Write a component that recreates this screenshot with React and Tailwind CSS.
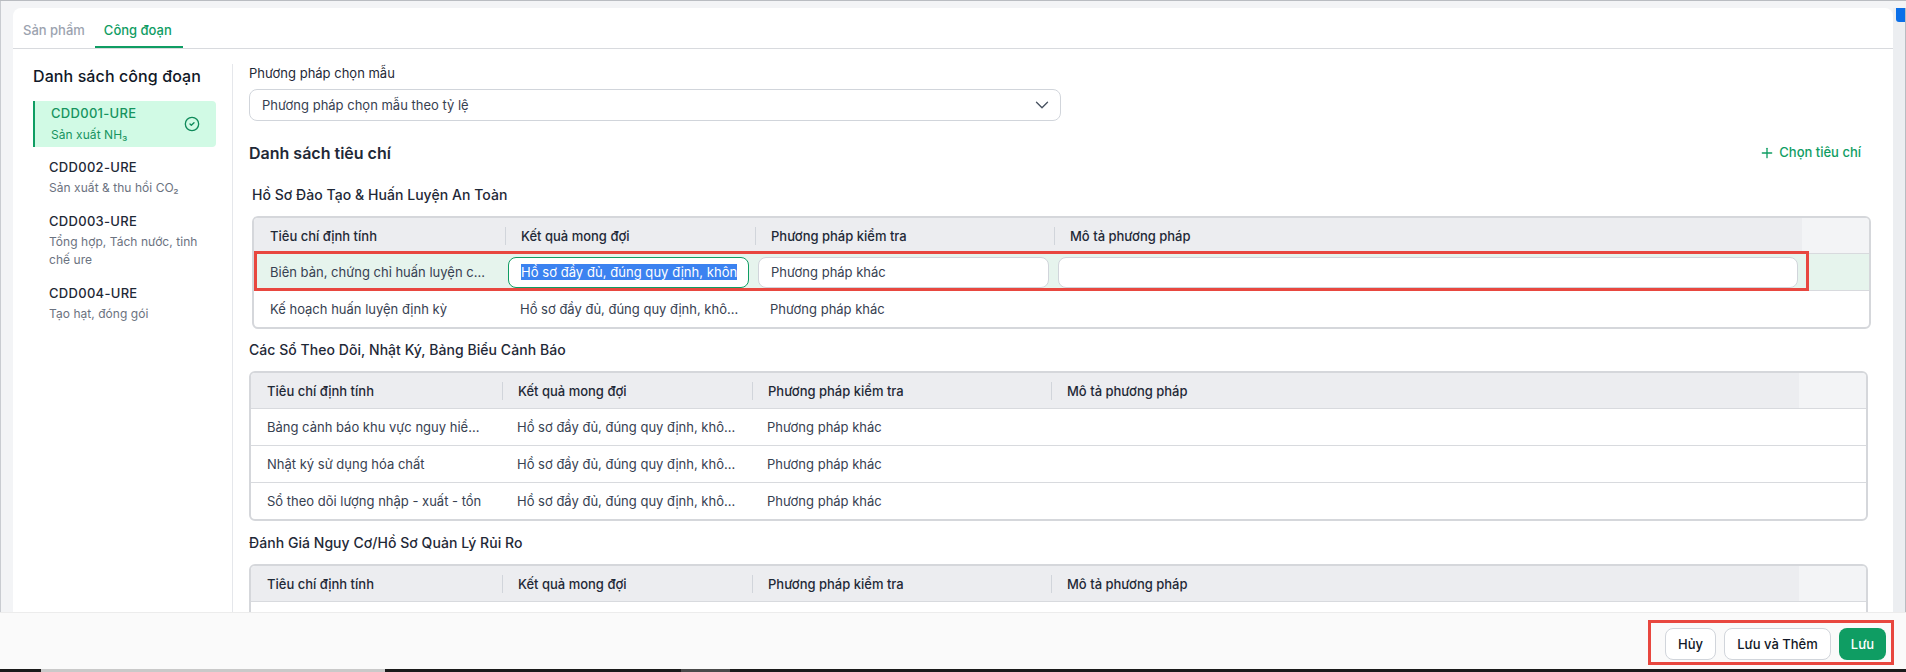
import React from "react";
import { ChevronDown, Plus, CircleCheck } from "lucide-react";

const cols = "grid grid-cols-[251px_250px_299px_748px_1fr]";
const HEAD = ["Tiêu chí định tính", "Kết quả mong đợi", "Phương pháp kiểm tra", "Mô tả phương pháp"];
const LONG = "Hồ sơ đầy đủ, đúng quy định, khô...";
const PP = "Phương pháp khác";

function Header() {
  return (
    <div className={`${cols} h-[36px] border-b border-[#d8dade]`}>
      {HEAD.map((h, i) => (
        <div key={h} className="bg-[#ecedf0] flex items-center relative pl-[16px] pt-[2px] text-[13px] font-medium text-[#1f2937]">
          {i > 0 && <span className="absolute left-0 top-[9px] h-[18px] w-px bg-[#d1d5db]" />}
          {h}
        </div>
      ))}
      <div className="bg-[#f3f4f6]" />
    </div>
  );
}

function Row({ a, last }) {
  return (
    <div className={`${cols} items-center text-[13px] text-[#374151] ${last ? "h-[36px]" : "h-[37px] border-b border-[#d8dade]"}`}>
      <div className="pl-[16px] pt-[2px] truncate">{a}</div>
      <div className="pl-[15px] pt-[2px]">{LONG}</div>
      <div className="pl-[15px] pt-[2px]">{PP}</div>
      <div />
      <div />
    </div>
  );
}

function EditRow() {
  const field = "h-[31px] rounded-[8px] bg-white border flex items-center";
  return (
    <div className={`${cols} h-[37px] items-center text-[13px] text-[#374151] bg-[#e6f4ed] border-b border-[#d8dade] relative`}>
      <div className="pl-[16px] pt-[2px] truncate">Biên bản, chứng chỉ huấn luyện c...</div>
      <div className={`${field} border-[#0f9d63] ml-[3px] mr-[6px] pl-[12px] pr-[11px] pt-[2px] overflow-hidden`}>
        <div className="overflow-hidden whitespace-nowrap w-full tracking-[0.05px]">
          <span className="bg-[#3b82f0] text-white">Hồ sơ đầy đủ, đúng quy định, không có sai sót</span>
        </div>
      </div>
      <div className={`${field} border-[#d1d5db] ml-[3px] mr-[5px] pl-[12px] pt-[2px]`}>{PP}</div>
      <div className={`${field} border-[#d1d5db] ml-[4px] mr-[4px]`} />
      <div />
      <div className="absolute left-0 top-[-3px] h-[40px] w-[1555px] border-[3px] border-[#e8473f] pointer-events-none" />
    </div>
  );
}

function Section({ title, children, cls }) {
  return (
    <section className={cls}>
      <h3 className="text-[14px] font-medium text-[#1f2937] leading-[20px] tracking-[0.05px]">{title}</h3>
      <div className="mt-[11px] border-2 border-[#d5d7db] rounded-[6px] bg-white overflow-hidden">{children}</div>
    </section>
  );
}

const STEPS = [
  ["CDD002-URE", "Sản xuất & thu hồi CO₂"],
  ["CDD003-URE", "Tổng hợp, Tách nước, tinh chế ure"],
  ["CDD004-URE", "Tạo hạt, đóng gói"],
];

export default function App() {
  return (
    <div
      className="h-[672px] w-full overflow-hidden flex flex-col bg-[#f3f4f6] border-t border-[#b9bcc1]"
      style={{ fontFamily: "Inter, 'Noto Sans', sans-serif" }}
    >
      <div className="flex-1 min-h-0 flex pt-[7px] pl-[12px] border-l border-[#c9ccd1]">
        <main className="flex-1 min-w-0 bg-white rounded-t-[8px] flex flex-col overflow-hidden">
          <nav className="h-[41px] shrink-0 flex items-end pl-[3px] border-b border-[#d8dade] text-[13px] font-medium">
            <div className="h-[41px] pt-[8px] pb-[2px] px-[7px] flex items-center text-[#9ca3af]">Sản phẩm</div>
            <div className="h-[41px] pt-[8px] ml-[3px] px-[9px] flex items-center text-[#0f9d63] border-b-[2px] border-[#0f9d63] w-[88px]">Công đoạn</div>
          </nav>
          <div className="flex-1 min-h-0 flex pt-[15px]">
            <aside className="w-[220px] shrink-0 border-r border-[#e5e7eb] pl-[20px] pr-[16px]">
              <h2 className="text-[16px] font-medium text-[#111827] leading-[24px] tracking-[0.1px]">Danh sách công đoạn</h2>
              <div className="mt-[13px] h-[46px] rounded-r-[4px] bg-[#d1fae5] border-l-2 border-[#0f9d63] pl-[16px] pr-[16px] flex items-center justify-between text-[#17945f]">
                <div>
                  <div className="text-[13px] font-medium leading-[20px] tracking-[0.3px]">CDD001-URE</div>
                  <div className="text-[12px] leading-[20px] mt-[2px] tracking-[0.05px]">Sản xuất NH₃</div>
                </div>
                <CircleCheck size={16} className="text-[#0f8a5a]" />
              </div>
              <div className="mt-[10px] flex flex-col gap-[14px] pl-[16px] pr-[8px]">
                {STEPS.map(([a, b]) => (
                  <div key={a}>
                    <div className="text-[13px] font-medium leading-[20px] tracking-[0.3px] text-[#1f2937]">{a}</div>
                    <div className="text-[12px] leading-[18px] text-[#6b7280] mt-[2px] tracking-[0.05px]">{b}</div>
                  </div>
                ))}
              </div>
            </aside>
            <div className="flex-1 min-w-0 pl-[16px] pr-[25px]">
              <label className="block text-[13px] text-[#1f2937] leading-[20px] -mt-[1px]">Phương pháp chọn mẫu</label>
              <div className="mt-[6px] w-[812px] h-[32px] border border-[#d1d5db] rounded-[8px] pl-[12px] pr-[7px] flex items-center justify-between text-[13px] text-[#374151]">
                <span className="block pt-[2px]">Phương pháp chọn mẫu theo tỷ lệ</span>
                <ChevronDown size={22} strokeWidth={1.5} className="text-[#4b5563]" />
              </div>
              <div className="mt-[20px] flex items-center justify-between h-[24px]">
                <h2 className="text-[16px] font-semibold text-[#1f2937]">Danh sách tiêu chí</h2>
                <button className="flex items-center gap-[4px] text-[13px] font-medium text-[#0f9d63] mr-[7px]">
                  <Plus size={16} />
                  Chọn tiêu chí
                </button>
              </div>
              <Section title="Hồ Sơ Đào Tạo & Huấn Luyện An Toàn" cls="mt-[20px] ml-[3px] -mr-[3px]">
                <Header />
                <EditRow />
                <Row a="Kế hoạch huấn luyện định kỳ" last />
              </Section>
              <Section title="Các Sổ Theo Dõi, Nhật Ký, Bảng Biểu Cảnh Báo" cls="mt-[11px]">
                <Header />
                <Row a="Bảng cảnh báo khu vực nguy hiể..." />
                <Row a="Nhật ký sử dụng hóa chất" />
                <Row a="Sổ theo dõi lượng nhập - xuất - tồn" last />
              </Section>
              <Section title="Đánh Giá Nguy Cơ/Hồ Sơ Quản Lý Rủi Ro" cls="mt-[12px]">
                <Header />
                <div className="h-[37px]" />
              </Section>
            </div>
          </div>
        </main>
        <div className="w-[13px] shrink-0 bg-[#eceef1] border-r border-[#b9bcc1] relative">
          <div className="absolute right-0 top-0 w-[9px] h-[14px] bg-[#0b6fe8] rounded-bl-[3px]" />
        </div>
      </div>
      <footer className="h-[57px] shrink-0 bg-[#fafafa] border-t border-[#ececec] flex items-start justify-end pr-[12px] pt-[7px]">
        <div className="h-[45px] border-[3px] border-[#e8473f] flex items-start gap-[8px] pt-[5px] pl-[14px] pr-[5px] text-[13px] font-medium">
          <button className="h-[32px] w-[51px] pt-[2px] rounded-[8px] bg-white border border-[#d1d5db] text-[#111827]">Hủy</button>
          <button className="h-[32px] w-[107px] pt-[2px] rounded-[8px] bg-white border border-[#d1d5db] text-[#111827]">Lưu và Thêm</button>
          <button className="h-[32px] w-[47px] pt-[2px] rounded-[8px] bg-[#0f9d63] text-white">Lưu</button>
        </div>
      </footer>
      <div className="h-[3px] shrink-0 flex bg-[#1a1a1a]">
        <div className="w-[41px]" />
        <div className="w-[344px] bg-[#c9c9c9]" />
        <div className="ml-[296px] w-[49px] bg-[#4a4a4a]" />
      </div>
    </div>
  );
}
